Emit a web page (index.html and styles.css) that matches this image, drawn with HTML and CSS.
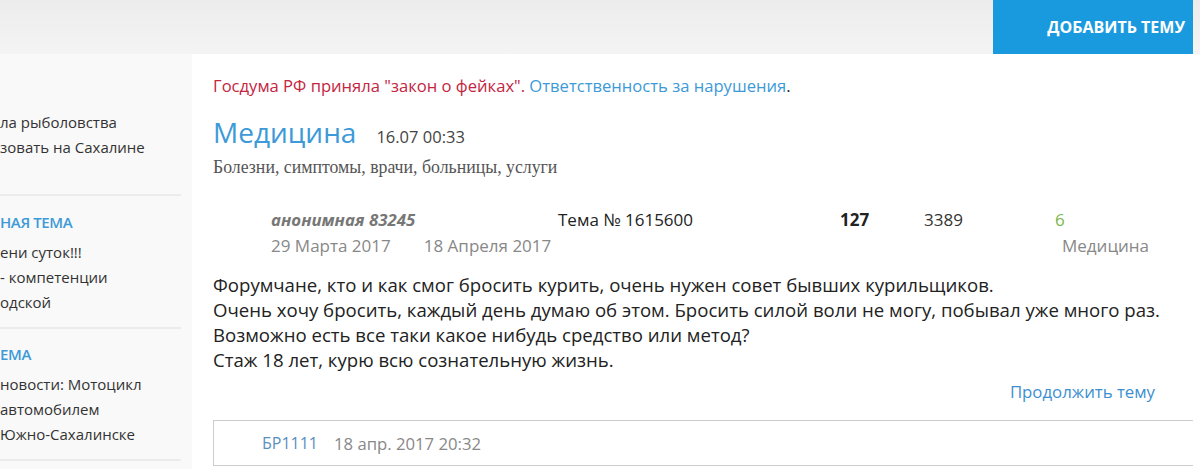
FILE: index.html
```html
<!DOCTYPE html>
<html lang="ru">
<head>
    <meta charset="UTF-8">
    <meta name="viewport" content="width=device-width, initial-scale=1.0">
    <title>Медицина - форум</title>
    <link rel="stylesheet" href="styles.css">
</head>
<body>

    <div class="topbar">
        <a href="#" class="add-btn">Добавить тему</a>
    </div>

    <div class="layout">
        <aside class="sidebar">
            <div class="side-block first">
                <a href="#" class="side-link">ла рыболовства</a>
                <a href="#" class="side-link">зовать на Сахалине</a>
            </div>
            <div class="side-block">
                <div class="side-title">ная тема</div>
                <a href="#" class="side-link">ени суток!!!</a>
                <a href="#" class="side-link">- компетенции</a>
                <a href="#" class="side-link">одской</a>
            </div>
            <div class="side-block last">
                <div class="side-title">ема</div>
                <a href="#" class="side-link">новости: Мотоцикл</a>
                <a href="#" class="side-link">автомобилем</a>
                <a href="#" class="side-link">Южно-Сахалинске</a>
            </div>
        </aside>

        <main class="main">
            <p class="news">
                <span class="news-red">Госдума РФ приняла "закон о фейках".</span>
                <a href="#" class="news-link">Ответственность за нарушения</a>.
            </p>

            <div class="title-row">
                <h1 class="title">Медицина</h1>
                <span class="title-date">16.07 00:33</span>
            </div>
            <p class="subtitle">Болезни, симптомы, врачи, больницы, услуги</p>

            <div class="topic-meta">
                <div class="col col-author">
                    <div class="author">анонимная 83245</div>
                    <div class="dates"><span>29 Марта 2017</span><span>18 Апреля 2017</span></div>
                </div>
                <div class="col col-num">Тема № 1615600</div>
                <div class="col col-replies">127</div>
                <div class="col col-views">3389</div>
                <div class="col col-last">
                    <div class="green">6</div>
                    <div class="section">Медицина</div>
                </div>
            </div>

            <div class="topic-text">
                Форумчане, кто и как смог бросить курить, очень нужен совет бывших курильщиков.<br>
                Очень хочу бросить, каждый день думаю об этом. Бросить силой воли не могу, побывал уже много раз.<br>
                Возможно есть все таки какое нибудь средство или метод?<br>
                Стаж 18 лет, курю всю сознательную жизнь.
            </div>

            <div class="continue"><a href="#">Продолжить тему</a></div>

            <div class="reply">
                <a href="#" class="reply-user">БР1111</a>
                <span class="reply-date">18 апр. 2017 20:32</span>
            </div>
        </main>
    </div>

</body>
</html>
```

FILE: styles.css
```css
body {
    margin: 0;
    font-family: "Open Sans", "Noto Sans", sans-serif;
    color: #222;
    background-color: #fff;
    overflow: hidden;
}

a {
    text-decoration: none;
}

.topbar {
    height: 54px;
    background: linear-gradient(#ececec, #f4f4f4);
    display: flex;
    justify-content: flex-end;
    padding-right: 7px;
}

.add-btn {
    width: 200px;
    background-color: #1a9ade;
    color: #fff;
    font-weight: bold;
    font-size: 16px;
    letter-spacing: 0;
    text-transform: uppercase;
    display: flex;
    align-items: center;
    justify-content: flex-end;
    padding-right: 8px;
    box-sizing: border-box;
}

.layout {
    display: flex;
}

.sidebar {
    width: 192px;
    flex-shrink: 0;
    background-color: #f9f9f9;
    overflow: hidden;
    height: 420px;
}

.side-block {
    margin-right: 11px;
    border-bottom: 2px solid #ececec;
    padding: 16px 0 12px;
    display: flex;
    flex-direction: column;
}

.side-block.first {
    padding-top: 56px;
    padding-bottom: 34px;
}

.side-block.last {
    padding-top: 15px;
}

.side-title {
    color: #3d9ad8;
    font-size: 15px;
    font-weight: 600;
    text-transform: uppercase;
    letter-spacing: -0.4px;
    margin-bottom: 8px;
}

.side-link {
    color: #333;
    font-size: 15px;
    line-height: 25px;
    white-space: nowrap;
}

.main {
    flex: 1;
    padding: 20px 7px 0 21px;
}

.news {
    margin: 0;
    font-size: 16.6px;
    line-height: 24px;
}

.news-red {
    color: #c4253f;
}

.news-link {
    color: #3d9ad8;
}

.title-row {
    display: flex;
    align-items: baseline;
    gap: 20px;
    margin-top: 15px;
}

.title {
    margin: 0;
    font-size: 28px;
    font-weight: normal;
    color: #3d9ad8;
    line-height: 38px;
}

.title-date {
    font-size: 16.5px;
    color: #444;
}

.subtitle {
    margin: 5px 0 0;
    font-family: "Liberation Serif", serif;
    font-size: 17.8px;
    line-height: 22px;
    color: #555;
}

.topic-meta {
    display: flex;
    padding-left: 58px;
    margin-top: 29px;
    font-size: 17px;
    line-height: 26px;
}

.col-author {
    width: 287px;
}

.author {
    font-size: 16.8px;
    font-weight: bold;
    font-style: italic;
    color: #777;
}

.dates {
    color: #888;
    display: flex;
    gap: 33px;
}

.col-num {
    width: 282px;
    color: #222;
}

.col-replies {
    width: 84px;
    font-weight: bold;
}

.col-views {
    width: 131px;
    color: #333;
}

.green {
    color: #7ab648;
}

.section {
    color: #888;
    padding-left: 7px;
}

.topic-text {
    margin-top: 13px;
    font-size: 18.6px;
    line-height: 25px;
    color: #222;
}

.continue {
    text-align: right;
    padding-right: 38px;
    margin-top: 8px;
    font-size: 16.8px;
    line-height: 24px;
}

.continue a {
    color: #3d8fd0;
}

.reply {
    margin-top: 16px;
    border: 1px solid #ccc;
    border-width: 1px 0 1px 1px;
    height: 46px;
    box-sizing: border-box;
    padding-left: 48px;
    display: flex;
    align-items: center;
    gap: 16px;
    font-size: 16px;
}

.reply-user {
    color: #5a8fc0;
}

.reply-date {
    color: #888;
    font-size: 16.7px;
}
```
